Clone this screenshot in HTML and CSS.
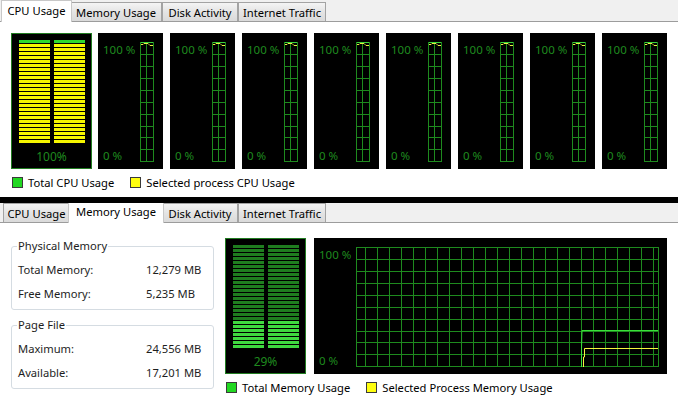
FILE: index.html
```html
<!DOCTYPE html>
<html>
<head>
<meta charset="utf-8">
<link rel="stylesheet" href="styles.css">
</head>
<body>
<div class="win win-top">
  <div class="tabstrip">
    <div class="tab t-cpu sel">CPU Usage</div>
    <div class="tab t-mem">Memory Usage</div>
    <div class="tab t-disk">Disk Activity</div>
    <div class="tab t-net">Internet Traffic</div>
  </div>
  <div class="cpu-page">
    <div class="meters">
      <div class="meter">
        <div class="bars">
          <div class="bar"><div class="seg seg-green seg-first"></div><div class="seg seg-yellow seg-fill"></div></div>
          <div class="bar"><div class="seg seg-green seg-first"></div><div class="seg seg-yellow seg-fill"></div></div>
        </div>
        <div class="meter-label">100%</div>
      </div>
      <div class="hist">
        <div class="hist-labels"><span>100 %</span><span>0 %</span></div>
        <svg class="col" width="14" height="120" viewBox="0 0 14 120"><use href="#colgrid"/></svg>
      </div>
      <div class="hist">
        <div class="hist-labels"><span>100 %</span><span>0 %</span></div>
        <svg class="col" width="14" height="120" viewBox="0 0 14 120"><use href="#colgrid"/></svg>
      </div>
      <div class="hist">
        <div class="hist-labels"><span>100 %</span><span>0 %</span></div>
        <svg class="col" width="14" height="120" viewBox="0 0 14 120"><use href="#colgrid"/></svg>
      </div>
      <div class="hist">
        <div class="hist-labels"><span>100 %</span><span>0 %</span></div>
        <svg class="col" width="14" height="120" viewBox="0 0 14 120"><use href="#colgrid"/></svg>
      </div>
      <div class="hist">
        <div class="hist-labels"><span>100 %</span><span>0 %</span></div>
        <svg class="col" width="14" height="120" viewBox="0 0 14 120"><use href="#colgrid"/></svg>
      </div>
      <div class="hist">
        <div class="hist-labels"><span>100 %</span><span>0 %</span></div>
        <svg class="col" width="14" height="120" viewBox="0 0 14 120"><use href="#colgrid"/></svg>
      </div>
      <div class="hist">
        <div class="hist-labels"><span>100 %</span><span>0 %</span></div>
        <svg class="col" width="14" height="120" viewBox="0 0 14 120"><use href="#colgrid"/></svg>
      </div>
      <div class="hist">
        <div class="hist-labels"><span>100 %</span><span>0 %</span></div>
        <svg class="col" width="14" height="120" viewBox="0 0 14 120">
          <defs>
            <g id="colgrid">
              <rect x="0.5" y="0.5" width="13" height="119" fill="none" stroke="#1e8a1e"/>
              <path d="M6.5 0V120M0 12.5H14M0 24.5H14M0 36.5H14M0 48.5H14M0 60.5H14M0 72.5H14M0 84.5H14M0 95.5H14M0 107.5H14" stroke="#1e8a1e" fill="none"/>
              <path d="M1 0.5H13" stroke="#3ad23a"/>
              <polyline points="1,2.5 3,2.5 4,1.5 8,1.5 9,2.5 10,3.5 13,3.5" fill="none" stroke="#e8f040"/>
            </g>
          </defs>
          <use href="#colgrid"/>
        </svg>
      </div>
    </div>
    <div class="legend">
      <span class="sw sw-g"></span><span class="lg-text">Total CPU Usage</span>
      <span class="sw sw-y"></span><span class="lg-text">Selected process CPU Usage</span>
    </div>
  </div>
</div>
<div class="sep"></div>
<div class="win win-bottom">
  <div class="tabstrip">
    <div class="tab t-cpu">CPU Usage</div>
    <div class="tab t-mem sel">Memory Usage</div>
    <div class="tab t-disk">Disk Activity</div>
    <div class="tab t-net">Internet Traffic</div>
  </div>
  <div class="mem-page">
    <div class="mem-left">
      <fieldset class="group">
        <legend>Physical Memory</legend>
        <div class="row"><span>Total Memory:</span><span>12,279 MB</span></div>
        <div class="row"><span>Free Memory:</span><span>5,235 MB</span></div>
      </fieldset>
      <fieldset class="group">
        <legend>Page File</legend>
        <div class="row"><span>Maximum:</span><span>24,556 MB</span></div>
        <div class="row"><span>Available:</span><span>17,201 MB</span></div>
      </fieldset>
    </div>
    <div class="mem-right">
      <div class="mem-charts">
        <div class="meter">
          <div class="bars">
            <div class="bar"><div class="seg seg-dark seg-used"></div><div class="seg seg-bright seg-free"></div></div>
            <div class="bar"><div class="seg seg-dark seg-used"></div><div class="seg seg-bright seg-free"></div></div>
          </div>
          <div class="meter-label">29%</div>
        </div>
        <div class="hist hist-wide">
          <div class="hist-labels"><span>100 %</span><span>0 %</span></div>
          <svg class="graph" width="303" height="120" viewBox="0 0 303 120">
            <defs>
              <pattern id="vlines" patternUnits="userSpaceOnUse" x="9" y="0" width="12" height="120">
                <path d="M0.5 0V120" stroke="#1e8a1e"/>
              </pattern>
            </defs>
            <rect x="9" y="0" width="289" height="120" fill="url(#vlines)"/>
            <rect x="0.5" y="0.5" width="302" height="119" fill="none" stroke="#1e8a1e"/>
            <path d="M0 12.5H303M0 24.5H303M0 36.5H303M0 48.5H303M0 60.5H303M0 72.5H303M0 84.5H303M0 95.5H303M0 107.5H303" stroke="#1e8a1e" fill="none"/>
            <polyline points="225.5,120 225.5,101 226,83.5 302,83.5" fill="none" stroke="#3ae03a"/>
            <polyline points="227.5,120 227.5,110 228.5,110 228.5,101.5 302,101.5" fill="none" stroke="#f4f440"/>
          </svg>
        </div>
      </div>
      <div class="legend">
        <span class="sw sw-g"></span><span class="lg-text">Total Memory Usage</span>
        <span class="sw sw-y"></span><span class="lg-text">Selected Process Memory Usage</span>
      </div>
    </div>
  </div>
</div>
</body>
</html>
```

FILE: styles.css
```css
* { box-sizing: border-box; }

html, body {
  margin: 0;
  padding: 0;
}

body {
  width: 678px;
  height: 401px;
  overflow: hidden;
  background: #000;
  font-family: "Noto Sans", "Open Sans", sans-serif;
  font-size: 11.2px;
  color: #000;
}

.win {
  background: #fff;
  overflow: hidden;
}

.win-top { height: 197px; }
.win-bottom { height: 198px; }

.sep {
  height: 6px;
  background: #000;
}

/* Tabs */
.tabstrip {
  display: flex;
  align-items: flex-end;
  background: #f0f0f0;
  border-bottom: 1px solid #9c9c9c;
  padding-left: 3px;
}

.win-top .tabstrip { height: 22px; }
.win-bottom .tabstrip { height: 20px; }

.tab {
  display: flex;
  align-items: center;
  justify-content: center;
  border: 1px solid #a3a3a3;
  border-bottom: 0;
  background: linear-gradient(#f4f4f4, #e4e4e4 50%, #dadada);
  white-space: nowrap;
  position: relative;
}

.win-top .tab { height: 19px; }
.win-bottom .tab { height: 19px; }

.t-cpu { width: 67px; }
.t-mem { width: 92px; }
.t-disk { width: 76px; }
.t-net { width: 88px; }

.tab.sel {
  background: #fff;
  border-color: #c8c8c8;
  margin: 0 -2px -1px;
  z-index: 1;
}
.t-cpu.sel { width: 71px; }
.t-mem.sel { width: 96px; }

.win-top .tab.sel { height: 22px; padding-bottom: 2px; }
.win-bottom .tab.sel { height: 22px; padding-bottom: 3px; }

/* CPU page */
.cpu-page {
  padding: 11px 0 0 11px;
}

.meters {
  display: flex;
  gap: 7px;
}

.meter {
  width: 81px;
  height: 136px;
  flex: none;
  background: #000;
  border: 1px solid #217c21;
  padding: 6px 6px 0;
  margin-right: -1px;
  display: flex;
  flex-direction: column;
  align-items: center;
}

.bars {
  display: flex;
  gap: 4px;
  height: 103px;
}

.bar {
  width: 31px;
  display: flex;
  flex-direction: column;
}

.seg-first { height: 4px; flex: none; }
.seg-fill { flex: 1; }
.seg-used { height: 76px; flex: none; }
.seg-free { flex: 1; }

.seg-green  { background: repeating-linear-gradient(#2fd82f 0 2.6px, #000 2.6px 4px); }
.seg-yellow { background: repeating-linear-gradient(#f6f600 0 2.6px, #000 2.6px 4px); }
.seg-dark   { background: repeating-linear-gradient(#1f7d1f 0 2.6px, #000 2.6px 4px); }
.seg-bright { background: repeating-linear-gradient(#3fd83f 0 2.6px, #000 2.6px 4px); }

.meter-label {
  margin-top: 7px;
  line-height: 14px;
  color: #1f8a1f;
  font-size: 12px;
}

.hist {
  width: 65px;
  height: 136px;
  flex: none;
  background: #000;
  display: flex;
  padding: 9px 0 0 5px;
}

.hist-wide { width: 353px; }

.hist-labels {
  width: 37px;
  height: 121px;
  flex: none;
  display: flex;
  flex-direction: column;
  justify-content: space-between;
  color: #1f8a1f;
  font-size: 11.5px;
  line-height: 14px;
  padding-top: 1px;
  white-space: nowrap;
}

.col, .graph { display: block; flex: none; }

/* Legend */
.legend {
  display: flex;
  align-items: center;
  margin-top: 8px;
  padding-left: 1px;
  height: 11px;
}

.sw {
  width: 11px;
  height: 11px;
  border: 1px solid #3a3a3a;
  margin-right: 5px;
  flex: none;
}
.sw-g { background: #22d822; }
.sw-y { background: #ffff10; }

.lg-text {
  margin-right: 16px;
  white-space: nowrap;
  line-height: 14px;
}

/* Memory page */
.mem-page {
  display: flex;
  padding: 15px 0 0 11px;
}

.mem-left {
  width: 203px;
  flex: none;
  display: flex;
  flex-direction: column;
  gap: 7px;
  margin-right: 11px;
}

.group {
  margin: 0;
  padding: 4px 6px 3px 6px;
  border: 1px solid #d5dce2;
  border-radius: 3px;
  min-width: 0;
}

.group legend {
  padding: 0 1px;
  margin-left: -1px;
  line-height: 16px;
  color: #1e1e1e;
}

.row {
  display: grid;
  grid-template-columns: 128px auto;
  line-height: 24px;
  color: #1e1e1e;
  white-space: nowrap;
}

.mem-right {
  display: flex;
  flex-direction: column;
}

.mem-charts {
  display: flex;
  gap: 8px;
}

.mem-charts .meter { margin-right: 0; }
```
